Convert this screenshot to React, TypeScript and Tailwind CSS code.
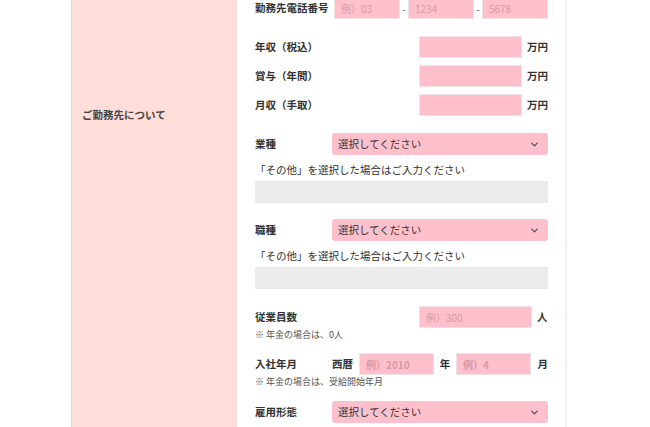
import { ChevronDown } from 'lucide-react';

const font = { fontFamily: '"Noto Sans CJK JP", "Noto Sans", sans-serif' };

function TextBox({ width, placeholder }: { width: string; placeholder?: string }) {
  return (
    <div
      className={`${width} h-[22px] bg-[#ffc0cb] border border-[#ebe3e4] flex items-center px-[6px] text-[10px] text-[#d69aa5]`}
    >
      {placeholder}
    </div>
  );
}

function Select() {
  return (
    <div className="flex-1 h-[22px] bg-[#ffc0cb] rounded-[3px] flex items-center justify-between pl-[6px] pr-[8px] text-[10.5px] text-[#333]">
      <span>選択してください</span>
      <ChevronDown size={11} strokeWidth={3} className="text-[#555]" />
    </div>
  );
}

function Label({ children, w = 'w-[77px]' }: { children: React.ReactNode; w?: string }) {
  return <div className={`${w} shrink-0 text-[10.5px] font-bold text-[#333]`}>{children}</div>;
}

function Note({ children }: { children: React.ReactNode }) {
  return <p className="text-[9px] text-[#555] leading-[12px] mt-[1px]">{children}</p>;
}

function MoneyRow({ label }: { label: string }) {
  return (
    <div className="flex items-center h-[22px]">
      <Label>{label}</Label>
      <div className="flex-1 flex items-center justify-end gap-[5px]">
        <TextBox width="w-[103px]" />
        <span className="w-[21px] text-[10.5px] font-bold text-[#333]">万円</span>
      </div>
    </div>
  );
}

function OtherBlock({ label }: { label: string }) {
  return (
    <div>
      <div className="flex items-center h-[22px]">
        <Label>{label}</Label>
        <Select />
      </div>
      <p className="text-[10.5px] text-[#333] h-[26px] pt-[4px] flex items-center">
        「その他」を選択した場合はご入力ください
      </p>
      <div className="h-[22px] bg-[#ebebeb]" />
    </div>
  );
}

export default function App() {
  return (
    <div className="w-[650px] h-[427px] overflow-hidden bg-white" style={font}>
      <div className="ml-[71px] w-[496px] flex -mt-[3px] min-h-[440px] border-r-2 border-[#efefef]">
        <div className="w-[166px] shrink-0 bg-[#ffddd9] border-l border-[#f3cfcb] pl-[10px] pt-[110px]">
          <p className="text-[10.5px] font-bold text-[#444]">ご勤務先について</p>
        </div>
        <div className="flex-1 pl-[18px] pr-[17px] flex flex-col">
          <div className="flex items-center h-[22px]">
            <Label w="w-[79px]">勤務先電話番号</Label>
            <div className="flex-1 flex items-center justify-between text-[10px] text-[#666]">
              <TextBox width="w-[66px]" placeholder="例）03" />
              <span>-</span>
              <TextBox width="w-[66px]" placeholder="1234" />
              <span>-</span>
              <TextBox width="w-[66px]" placeholder="5678" />
            </div>
          </div>

          <div className="mt-[17px] flex flex-col gap-[7px]">
            <MoneyRow label="年収（税込）" />
            <MoneyRow label="賞与（年間）" />
            <MoneyRow label="月収（手取）" />
          </div>

          <div className="mt-[17px]">
            <OtherBlock label="業種" />
          </div>
          <div className="mt-[16px]">
            <OtherBlock label="職種" />
          </div>

          <div className="mt-[17px]">
            <div className="flex items-center h-[22px]">
              <Label>従業員数</Label>
              <div className="flex-1 flex items-center justify-end gap-[5px]">
                <TextBox width="w-[113px]" placeholder="例）300" />
                <span className="w-[11px] text-[10.5px] font-bold text-[#333]">人</span>
              </div>
            </div>
            <Note>※ 年金の場合は、0人</Note>
          </div>

          <div className="mt-[12px]">
            <div className="flex items-center h-[22px] text-[10.5px] font-bold text-[#333]">
              <Label>入社年月</Label>
              <span className="w-[27px]">西暦</span>
              <TextBox width="w-[75px]" placeholder="例）2010" />
              <span className="w-[22px] text-center">年</span>
              <TextBox width="w-[75px]" placeholder="例）4" />
              <span className="flex-1 text-right">月</span>
            </div>
            <Note>※ 年金の場合は、受給開始年月</Note>
          </div>

          <div className="mt-[13px] flex items-center h-[22px]">
            <Label>雇用形態</Label>
            <Select />
          </div>
        </div>
      </div>
    </div>
  );
}
